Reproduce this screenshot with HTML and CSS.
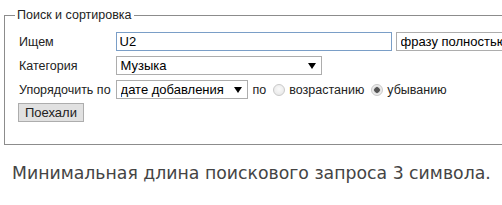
FILE: index.html
```html
<!DOCTYPE html>
<html lang="ru">
<head>
    <meta charset="UTF-8">
    <title>Поиск</title>
    <link rel="stylesheet" href="styles.css">
</head>
<body>
    <form class="search-form" onsubmit="return false">
        <fieldset class="search-box">
            <legend>Поиск и сортировка</legend>
            <div class="search-grid">
                <label for="q">Ищем</label>
                <div class="field-line">
                    <input type="text" id="q" class="text-input" value="U2">
                    <span class="select-wrap wide"><select class="select-box"><option>фразу полностью</option></select></span>
                </div>

                <label>Категория</label>
                <div class="field-line">
                    <span class="select-wrap cat"><select class="select-box"><option>Музыка</option></select></span>
                </div>

                <label>Упорядочить по</label>
                <div class="field-line">
                    <span class="select-wrap sort"><select class="select-box"><option>дате добавления</option></select></span>
                    <span class="by">по</span>
                    <label class="radio-label"><input type="radio" name="dir" class="radio"> возрастанию</label>
                    <label class="radio-label"><input type="radio" name="dir" class="radio" checked> убыванию</label>
                </div>
            </div>
            <button type="submit" class="go-btn">Поехали</button>
        </fieldset>
    </form>

    <p class="hint">Минимальная длина поискового запроса 3 символа.</p>
</body>
</html>
```

FILE: styles.css
```css
body { margin: 0; padding: 8px 0 0 0; background: #fff; font-family: "Liberation Sans", Arial, sans-serif; font-size: 12.5px; color: #000; overflow: hidden; }
.search-form { margin: 0; }
.search-box { margin: 0 0 0 4px; padding: 9px 10px 22px 13px; border: 1px solid #8c8c8c; border-right: none; min-width: max-content; }
.search-box legend { margin-left: -3px; padding: 0 2px; line-height: 15px; color: #222; }
.search-grid { display: grid; grid-template-columns: auto auto; justify-content: start; column-gap: 5px; row-gap: 5px; align-items: center; }
.search-grid > label { padding-left: 1px; color: #222; }
.field-line { display: flex; align-items: center; gap: 4px; white-space: nowrap; }
.text-input { box-sizing: border-box; width: 276px; height: 19px; margin: 0; padding: 0 3px; border: 1px solid #7a9ec7; font: 13px "Liberation Sans", Arial, sans-serif; color: #000; outline: none; }
.select-wrap { position: relative; display: inline-block; }
.select-wrap::after { content: ""; position: absolute; right: 6px; top: 7px; border-left: 4px solid transparent; border-right: 4px solid transparent; border-top: 6px solid #000; pointer-events: none; }
.select-box { appearance: none; -webkit-appearance: none; box-sizing: border-box; height: 19px; margin: 0; padding: 0 20px 0 4px; border: 1px solid #adadad; border-radius: 0; background: #fff; font: 13px "Liberation Sans", Arial, sans-serif; color: #000; width: 100%; }
.select-wrap.wide { width: 130px; }
.select-wrap.wide::after { display: none; }
.select-wrap.cat { width: 206px; }
.select-wrap.sort { width: 132px; }
.by { margin-left: 1px; color: #222; }
.radio-label { display: inline-flex; align-items: center; gap: 4px; margin-left: 3px; color: #222; }
.radio { appearance: none; -webkit-appearance: none; width: 12px; height: 12px; margin: 0; border: 1px solid #c9c9c9; border-radius: 50%; background: radial-gradient(circle at 50% 40%, #fafafa, #e4e4e4); }
.radio:checked { background: radial-gradient(circle, #555 0 2.5px, #c8c8c8 3px, #f0f0f0 4px, #e4e4e4 6px); }
.go-btn { display: block; margin: 4px 0 0 0; padding: 0 6px; height: 19px; border: 1px solid #adadad; border-radius: 0; background: #e1e1e1; font: 13px "Liberation Sans", Arial, sans-serif; color: #222; }
.hint { margin: 18px 0 0 12px; font-family: "DejaVu Sans", Verdana, sans-serif; font-size: 17.3px; color: #444; white-space: nowrap; }
```
